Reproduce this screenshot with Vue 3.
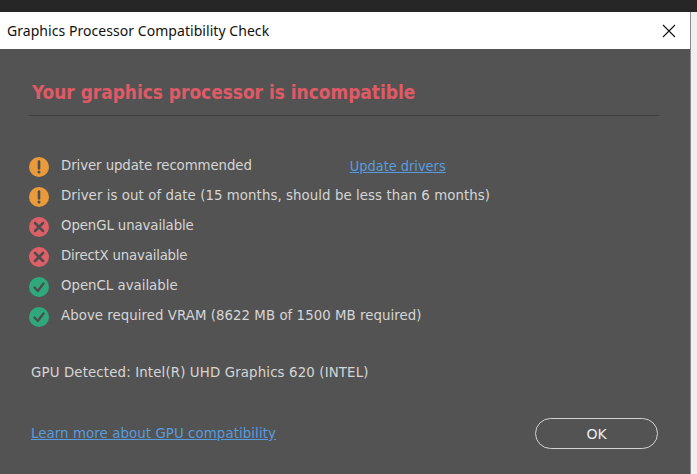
<script setup>
// track: per-row letter-spacing, the fallback font's widths differ a little row by row
const checks = [
  { kind: 'warn', text: 'Driver update recommended', link: 'Update drivers', track: -0.08 },
  { kind: 'warn', text: 'Driver is out of date (15 months, should be less than 6 months)', track: 0.08 },
  { kind: 'fail', text: 'OpenGL unavailable', track: -0.1 },
  { kind: 'fail', text: 'DirectX unavailable', track: -0.2 },
  { kind: 'ok', text: 'OpenCL available', track: 0 },
  { kind: 'ok', text: 'Above required VRAM (8622 MB of 1500 MB required)', track: 0.06 }
];
</script>

<template>
  <div class="screen">
    <div class="topbar"></div>
    <div class="window">
      <div class="dialog">
        <header class="titlebar">
          <span class="title">Graphics Processor Compatibility Check</span>
          <svg class="close" width="14" height="14" viewBox="0 0 14 14">
            <path d="M1 1L13 13M13 1L1 13" stroke="#111" stroke-width="1.1" fill="none" />
          </svg>
        </header>
        <main class="body">
          <h1 class="heading">Your graphics processor is incompatible</h1>
          <ul class="checks">
            <li v-for="item in checks" :key="item.text" class="check">
              <svg class="icon" width="20" height="20" viewBox="0 0 20 20">
                <template v-if="item.kind === 'warn'">
                  <circle cx="10" cy="10" r="10" fill="#e99b3c" />
                  <path d="M10 4.5V11.5" stroke="#4d4d4d" stroke-width="2.6" stroke-linecap="round" />
                  <circle cx="10" cy="15" r="1.5" fill="#4d4d4d" />
                </template>
                <template v-else-if="item.kind === 'fail'">
                  <circle cx="10" cy="10" r="10" fill="#dd5f68" />
                  <path d="M6 6L14 14M14 6L6 14" stroke="#4d4d4d" stroke-width="2.6" stroke-linecap="round" />
                </template>
                <template v-else>
                  <circle cx="10" cy="10" r="10" fill="#2fa87c" />
                  <path d="M5.5 10.5L8.8 14L14.5 6.5" stroke="#4d4d4d" stroke-width="2.4" stroke-linecap="round" stroke-linejoin="round" fill="none" />
                </template>
              </svg>
              <span class="check-text" :style="{ letterSpacing: item.track + 'px' }">{{ item.text }}</span>
              <a v-if="item.link" class="link update" href="#">{{ item.link }}</a>
            </li>
          </ul>
          <p class="gpu">GPU Detected: Intel(R) UHD Graphics 620 (INTEL)</p>
          <footer class="actions">
            <a class="link learn" href="#">Learn more about GPU compatibility</a>
            <button class="ok" type="button">OK</button>
          </footer>
        </main>
      </div>
      <div class="backdrop"></div>
    </div>
  </div>
</template>

<style>
html, body {
  margin: 0;
  overflow: hidden;
  background: #535353;
}
</style>

<style scoped>
.screen {
  width: 697px;
  height: 474px;
  display: flex;
  flex-direction: column;
  font-family: "DejaVu Sans", sans-serif;
  font-stretch: condensed;
}

.topbar {
  height: 12px;
  background: #262626;
}

.window {
  flex: 1;
  display: flex;
  min-height: 0;
}

.dialog {
  width: 690px;
  display: flex;
  flex-direction: column;
  border-right: 1px solid #8a8a8a;
}

.backdrop {
  flex: 1;
  background: #f0f0f0;
}

.titlebar {
  height: 37px;
  flex: none;
  background: #fff;
  display: flex;
  align-items: center;
  justify-content: space-between;
  padding: 0 14px 0 7px;
}

.title {
  font-family: "Noto Sans", sans-serif;
  font-stretch: normal;
  font-size: 14px;
  letter-spacing: 0.05px;
  color: #111;
}

.close {
  display: block;
}

.body {
  flex: 1;
  background: #535353;
  padding: 0 31px 0 29px;
  display: flex;
  flex-direction: column;
}

.heading {
  margin: 30px 0 0;
  padding: 0 0 9px 3px;
  font-size: 18.9px;
  line-height: 27px;
  font-weight: 700;
  color: #e05a66;
  border-bottom: 1px solid #3f3f3f;
}

.checks {
  list-style: none;
  margin: 41px 0 0;
  padding: 0;
  display: flex;
  flex-direction: column;
  gap: 10px;
}

.check {
  height: 20px;
  display: flex;
  align-items: center;
  font-size: 14.8px;
  color: #d6d6d6;
}

.icon {
  flex: none;
  margin-right: 12px;
}

.check-text {
  position: relative;
  top: -3px;
  white-space: nowrap;
}

.update {
  position: relative;
  top: -1px;
  margin-left: 98px;
  font-size: 14.4px;
}

.link {
  color: #589cdf;
  text-decoration: underline;
}

.learn {
  margin-bottom: 2px;
  font-size: 14.8px;
  letter-spacing: 0.1px;
}

.gpu {
  margin: 35px 0 0 2px;
  font-size: 14.8px;
  letter-spacing: 0.15px;
  line-height: 20px;
  color: #d6d6d6;
}

.actions {
  margin-top: 36px;
  padding: 0 1px 0 2px;
  display: flex;
  align-items: center;
  justify-content: space-between;
}

.ok {
  width: 123px;
  height: 31px;
  box-sizing: border-box;
  border: 1px solid #d2d2d2;
  border-radius: 16px;
  background: transparent;
  color: #ececec;
  font-family: inherit;
  font-size: 14px;
}
</style>
